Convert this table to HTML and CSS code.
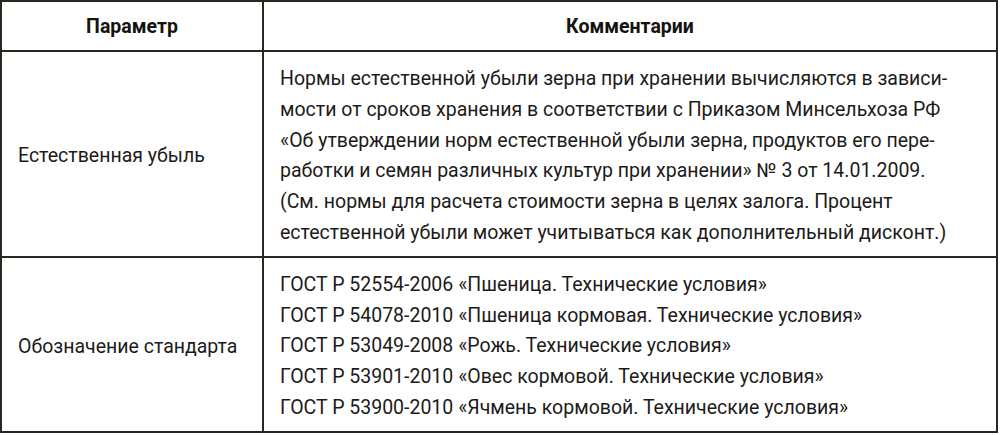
FILE: index.html
```html
<!DOCTYPE html>
<html lang="ru">
<head>
<meta charset="utf-8">
<title>Параметры</title>
<link rel="stylesheet" href="styles.css">
</head>
<body>
<table class="spec">
  <thead>
    <tr>
      <th class="col-param">Параметр</th>
      <th class="col-comment">Комментарии</th>
    </tr>
  </thead>
  <tbody>
    <tr>
      <td class="param">Естественная убыль</td>
      <td class="comment">Нормы естественной убыли зерна при хранении вычисляются в зависи-<br>мости от сроков хранения в соответствии с Приказом Минсельхоза РФ<br>«Об утверждении норм естественной убыли зерна, продуктов его пере-<br>работки и семян различных культур при хранении» № 3 от 14.01.2009.<br>(См. нормы для расчета стоимости зерна в целях залога. Процент<br>естественной убыли может учитываться как дополнительный дисконт.)</td>
    </tr>
    <tr>
      <td class="param">Обозначение стандарта</td>
      <td class="comment">ГОСТ Р 52554-2006 «Пшеница. Технические условия»<br>ГОСТ Р 54078-2010 «Пшеница кормовая. Технические условия»<br>ГОСТ Р 53049-2008 «Рожь. Технические условия»<br>ГОСТ Р 53901-2010 «Овес кормовой. Технические условия»<br>ГОСТ Р 53900-2010 «Ячмень кормовой. Технические условия»</td>
    </tr>
  </tbody>
</table>
</body>
</html>
```
FILE: styles.css
```css
html, body {
  margin: 0;
  padding: 0;
  background: #ffffff;
}
body {
  font-family: Roboto, "Liberation Sans", sans-serif;
  color: #1c1b19;
}
.spec {
  border-collapse: separate;
  border-spacing: 0;
  width: 998px;
  border-left: 2px solid #2c271e;
  border-top: 2px solid #2c271e;
}
.spec th,
.spec td {
  border-right: 2px solid #2c271e;
  border-bottom: 2px solid #2c271e;
  padding: 0;
}
.spec th {
  height: 48px;
  font-size: 19.5px;
  font-weight: 700;
  text-align: center;
  vertical-align: middle;
  color: #141311;
}
.col-param {
  width: 260px;
}
.param {
  font-size: 19.5px;
  vertical-align: middle;
  padding: 4px 8px 0 16px !important;
  white-space: nowrap;
}
.comment {
  font-size: 19.5px;
  line-height: 30.8px;
  padding: 12px 8px 7px 16px !important;
  white-space: nowrap;
}
```
